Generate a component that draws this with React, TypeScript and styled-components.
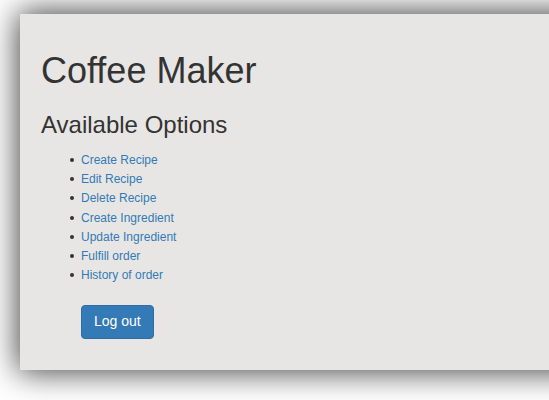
import * as React from 'react';
import styled, { createGlobalStyle } from 'styled-components';

const GlobalStyle = createGlobalStyle`
  html, body {
    margin: 0;
    padding: 0;
    background: #fff;
    overflow: hidden;
  }
  body {
    font-family: "Liberation Sans", Arial, Helvetica, sans-serif;
    color: #333;
  }
`;

const Page = styled.div`
  padding: 14px 0 0 20px;
  height: 400px;
  box-sizing: border-box;
`;

const Panel = styled.div`
  width: 620px;
  height: 356px;
  box-sizing: border-box;
  padding: 17px 21px 0;
  background: #e8e6e4;
  box-shadow: 0 0 30px 2px rgba(0, 0, 0, 0.75);
`;

const Title = styled.h1`
  margin: 20px 0 10px;
  font-size: 36px;
  font-weight: 500;
  line-height: 1.1;
`;

const Subtitle = styled.h3`
  margin: 21px 0 10px;
  font-size: 24px;
  font-weight: 500;
  line-height: 1.1;
`;

const OptionList = styled.ul`
  margin: 13px 0 0;
  padding-left: 40px;
  list-style: none;
  font-size: 12px;
  line-height: 19.17px;
`;

const Option = styled.li`
  &::before {
    content: "";
    display: inline-block;
    width: 4px;
    height: 4px;
    border-radius: 50%;
    background: #333;
    margin-left: -10.6px;
    margin-right: 6.6px;
    vertical-align: 2px;
  }
`;

const OptionLink = styled.a`
  color: #337ab7;
  text-decoration: none;
`;

const Actions = styled.div`
  display: flex;
  padding-left: 40px;
  margin-top: 20px;
`;

const Button = styled.button`
  padding: 6px 12px;
  font-family: inherit;
  font-size: 14px;
  line-height: 1.42857;
  color: #fff;
  background: #337ab7;
  border: 1px solid #2e6da4;
  border-radius: 4px;
  cursor: pointer;
`;

const options = [
  'Create Recipe',
  'Edit Recipe',
  'Delete Recipe',
  'Create Ingredient',
  'Update Ingredient',
  'Fulfill order',
  'History of order',
];

export default function App() {
  return (
    <>
      <GlobalStyle />
      <Page>
        <Panel>
          <Title>Coffee Maker</Title>
          <Subtitle>Available Options</Subtitle>
          <OptionList>
            {options.map((o) => (
              <Option key={o}>
                <OptionLink href="#">{o}</OptionLink>
              </Option>
            ))}
          </OptionList>
          <Actions>
            <Button>Log out</Button>
          </Actions>
        </Panel>
      </Page>
    </>
  );
}
